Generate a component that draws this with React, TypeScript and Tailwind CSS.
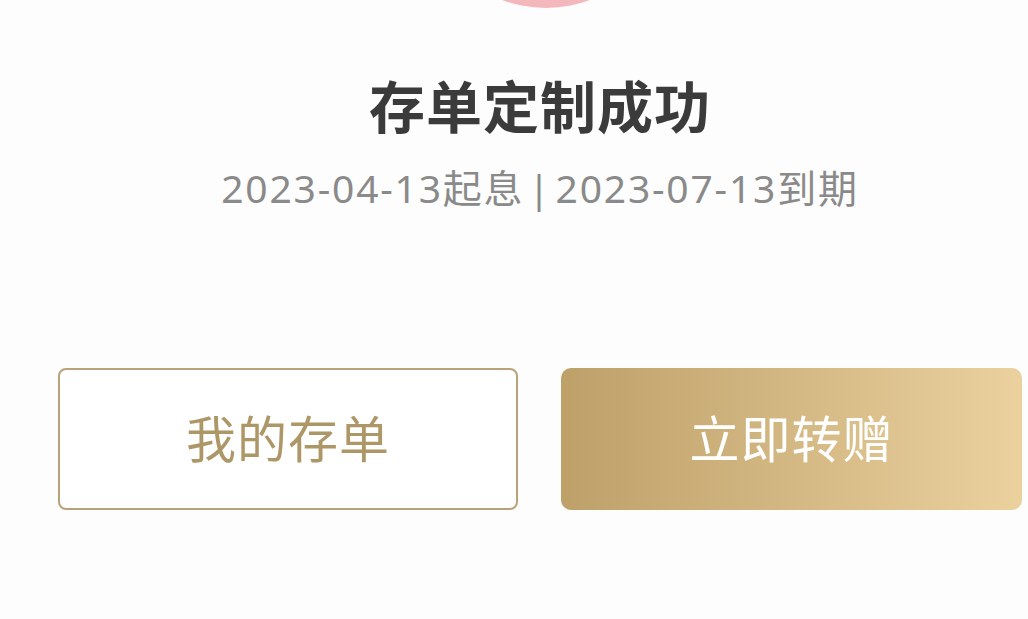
export default function App() {
  const font = { fontFamily: '"Noto Sans CJK SC", "Noto Sans", sans-serif' }
  return (
    <div
      className="w-[1028px] h-[619px] overflow-hidden bg-[#fdfdfd] flex flex-col items-center pl-[58px] pr-[6px]"
      style={font}
    >
      {/* success badge, mostly scrolled off the top */}
      <div className="w-[250px] h-[8px] overflow-hidden relative ml-[12px]">
        <div className="absolute left-0 bottom-0 w-[250px] h-[250px] rounded-full bg-[#f4b7bb]" />
      </div>

      <h1 className="mt-[60px] text-[56px] leading-[72px] font-bold text-[#3b3b3b] tracking-[1px]">
        存单定制成功
      </h1>
      <p
        className="mt-[24px] text-[39px] leading-[48px] text-[#8a8a8a] tracking-[1.8px] [word-spacing:-8px]"
        style={{ fontFamily: '"Noto Sans", "Noto Sans CJK SC", sans-serif' }}
      >
        2023-04-13起息 | 2023-07-13到期
      </p>

      <div className="mt-[156px] flex gap-[43px]">
        <button className="w-[460px] h-[142px] pb-[6px] rounded-[8px] border-2 border-[#b7a27a] bg-white text-[50px] text-[#ad9767] tracking-[1px]">
          我的存单
        </button>
        <button className="w-[461px] h-[142px] pb-[6px] rounded-[10px] bg-gradient-to-r from-[#bea069] to-[#ead19e] text-[50px] text-white tracking-[1px]">
          立即转赠
        </button>
      </div>
    </div>
  )
}
